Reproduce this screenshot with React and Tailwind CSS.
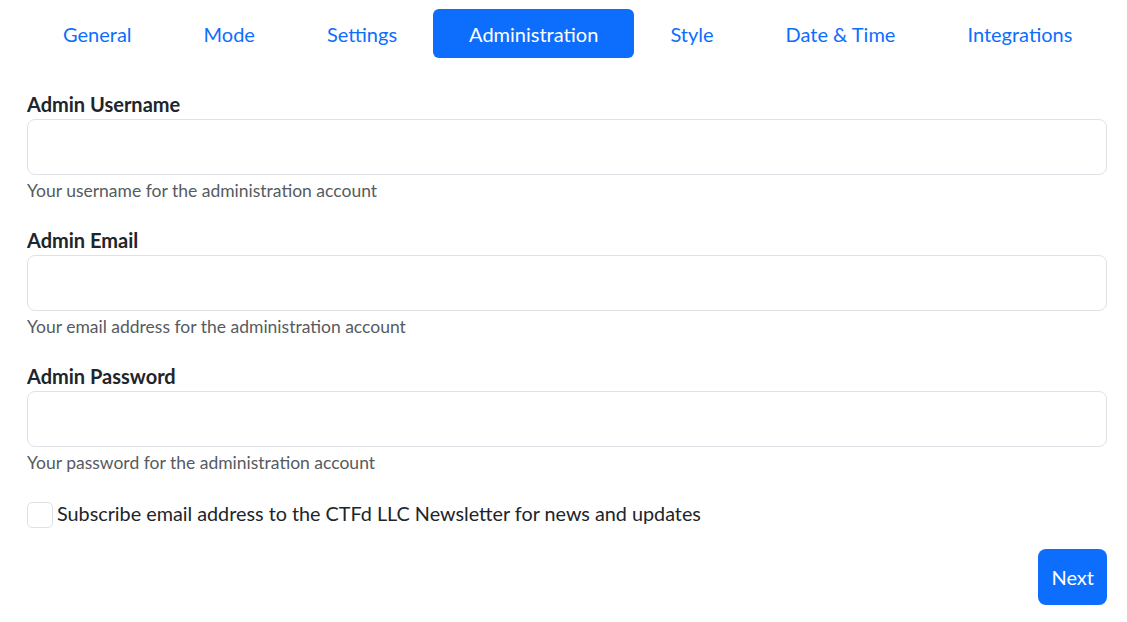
import React, { useState } from 'react';

const tabs = ['General', 'Mode', 'Settings', 'Administration', 'Style', 'Date & Time', 'Integrations'];

const fields = [
  { label: 'Admin Username', help: 'Your username for the administration account', type: 'text' },
  { label: 'Admin Email', help: 'Your email address for the administration account', type: 'email' },
  { label: 'Admin Password', help: 'Your password for the administration account', type: 'password' },
];

const App = () => {
  const [active, setActive] = useState('Administration');
  const [subscribe, setSubscribe] = useState(false);

  return (
    <div className="min-h-screen bg-white pl-[27px] pr-[20px] pt-[9px] font-['Lato','Noto_Sans',sans-serif] text-[#212529]">
      <nav className="flex justify-between">
        {tabs.map(t => (
          <button
            key={t}
            onClick={() => setActive(t)}
            className={
              t === active
                ? 'h-[49px] whitespace-nowrap rounded-[6px] bg-[#0d6efd] px-[36px] text-[20px] text-white'
                : 'h-[49px] whitespace-nowrap rounded-[6px] px-[36px] text-[20px] text-[#0d6efd]'
            }
          >
            {t}
          </button>
        ))}
      </nav>

      <form className="mt-[33px] flex flex-col gap-[24px]" onSubmit={e => e.preventDefault()}>
        {fields.map(f => (
          <div key={f.label}>
            <label className="block text-[20px] font-bold leading-[26px]">{f.label}</label>
            <input
              type={f.type}
              className="mt-[2px] block h-[56px] w-full rounded-[8px] border border-[#dee2e6] bg-white px-4 text-[20px] outline-none"
            />
            <div className="mt-[4px] text-[17.5px] leading-[24px] text-[#565b61]">{f.help}</div>
          </div>
        ))}
      </form>

      <label className="mt-[27px] flex items-start gap-[4px] text-[19.8px] leading-[22px]">
        <input
          type="checkbox"
          checked={subscribe}
          onChange={e => setSubscribe(e.target.checked)}
          className="h-[26px] w-[26px] shrink-0 appearance-none rounded-[5px] border border-[#dee2e6] bg-white checked:bg-[#0d6efd]"
        />
        <span>Subscribe email address to the CTFd LLC Newsletter for news and updates</span>
      </label>

      <div className="mt-[21px] flex justify-end">
        <button className="h-[56px] rounded-[8px] bg-[#0d6efd] px-[13px] text-[20px] text-white">Next</button>
      </div>
    </div>
  );
};

export default App;
